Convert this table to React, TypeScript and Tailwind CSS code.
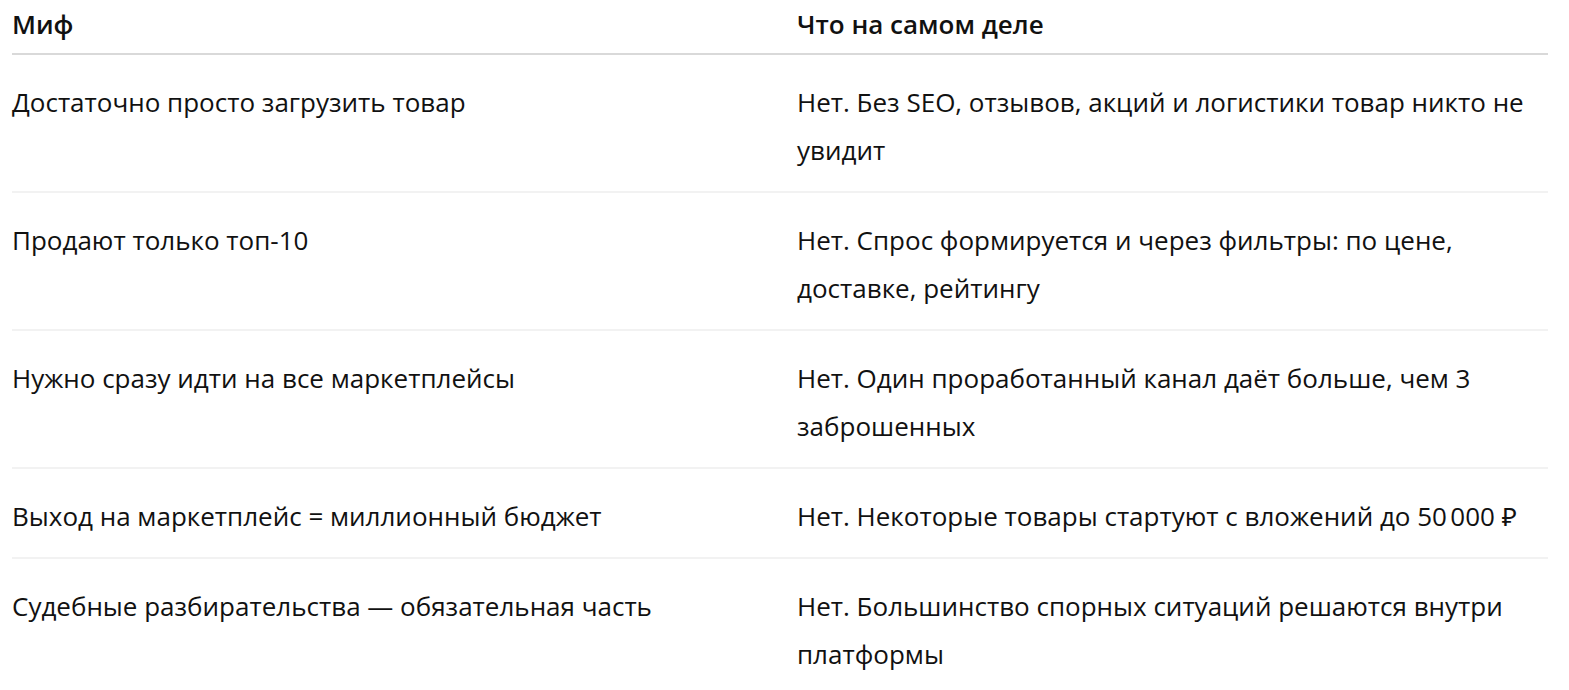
const rows = [
  {
    myth: 'Достаточно просто загрузить товар',
    truth: 'Нет. Без SEO, отзывов, акций и логистики товар никто не увидит',
  },
  {
    myth: 'Продают только топ-10',
    truth: 'Нет. Спрос формируется и через фильтры: по цене, доставке, рейтингу',
  },
  {
    myth: 'Нужно сразу идти на все маркетплейсы',
    truth: 'Нет. Один проработанный канал даёт больше, чем 3 заброшенных',
  },
  {
    myth: 'Выход на маркетплейс = миллионный бюджет',
    truth: 'Нет. Некоторые товары стартуют с вложений до 50\u202F000 ₽',
  },
  {
    myth: 'Судебные разбирательства — обязательная часть',
    truth: 'Нет. Большинство спорных ситуаций решаются внутри платформы',
  },
];

export default function App() {
  return (
    <div className="min-h-screen bg-white px-3 text-[26px] leading-[48px] text-[#111111] font-['Open_Sans','Noto_Sans',sans-serif]">
      <div className="w-[1536px]">
        <div className="grid grid-cols-[785px_1fr] border-b-2 border-[#d9d9d9] pb-[5px] font-semibold">
          <div>Миф</div>
          <div>Что на самом деле</div>
        </div>
        {rows.map((row) => (
          <div
            key={row.myth}
            className="grid grid-cols-[785px_1fr] border-b-2 border-[#f2f2f2] pt-[23px] pb-[17px]"
          >
            <div className="pr-6">{row.myth}</div>
            <div className="pr-4">{row.truth}</div>
          </div>
        ))}
      </div>
    </div>
  );
}
